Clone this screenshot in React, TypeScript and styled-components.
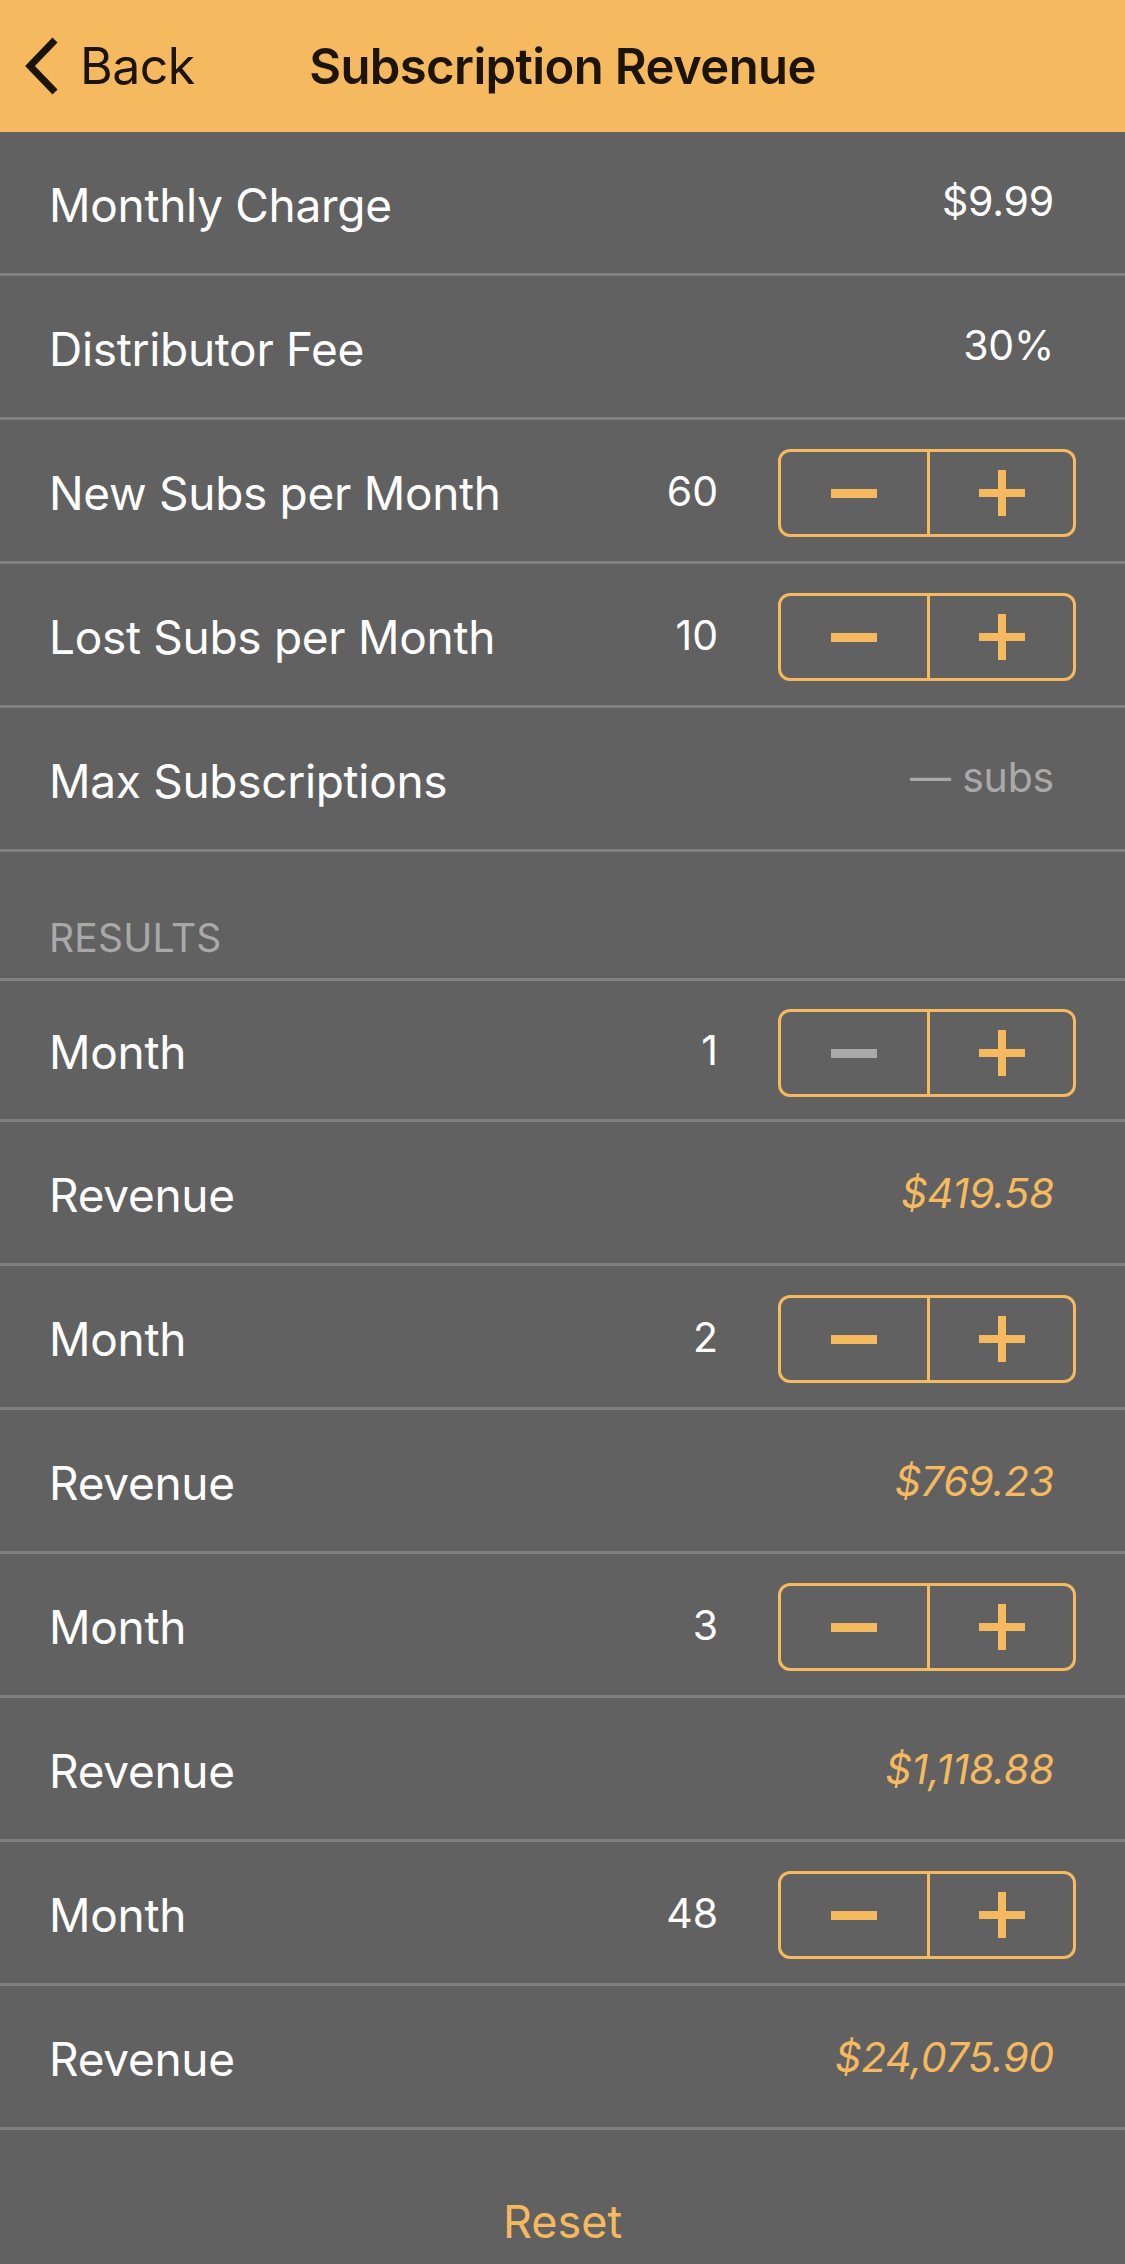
import React from "react";
import styled, { createGlobalStyle } from "styled-components";

const ORANGE = "#f5b95f";
const BG = "#616161";
const SEP = "#828282";

const GlobalStyle = createGlobalStyle`
  html, body { margin: 0; padding: 0; background: ${BG}; }
  body { font-family: Inter, "Noto Sans", "Liberation Sans", sans-serif; -webkit-font-smoothing: antialiased; }
  * { box-sizing: border-box; }
`;

const Page = styled.div`
  width: 1125px;
  min-height: 2264px;
  background: ${BG};
  display: flex;
  flex-direction: column;
`;

const NavBar = styled.header`
  height: 132px;
  background: ${ORANGE};
  display: grid;
  grid-template-columns: 1fr auto 1fr;
  align-items: center;
  color: #1c1408;
`;

const BackButton = styled.div`
  display: flex;
  align-items: center;
  gap: 20px;
  padding-left: 24px;
  font-size: 50px;
  font-weight: 400;
  letter-spacing: -0.5px;
`;

const Title = styled.h1`
  margin: 0;
  font-size: 49px;
  font-weight: 600;
  letter-spacing: -0.6px;
`;

const Row = styled.div<{ $height?: number }>`
  height: ${(p) => p.$height ?? 144}px;
  border-bottom: 3px solid ${SEP};
  display: flex;
  align-items: center;
  padding: 0 49px;
  color: #ffffff;
`;

const Label = styled.span`
  flex: 1;
  font-size: 46px;
  letter-spacing: -0.3px;
  padding-top: 4px;
`;

const Value = styled.span<{ $muted?: boolean; $result?: boolean }>`
  font-size: 41px;
  padding-right: 22px;
  letter-spacing: -0.2px;
  color: ${(p) => (p.$result ? ORANGE : p.$muted ? "#a9a9a9" : "#ffffff")};
  font-style: ${(p) => (p.$result ? "italic" : "normal")};
  margin-top: ${(p) => (p.$result ? "0px" : "-4px")};
`;

const Count = styled.span`
  font-size: 41px;
  margin-right: 60px;
`;

const Stepper = styled.div`
  width: 298px;
  height: 88px;
  border: 3px solid ${ORANGE};
  border-radius: 12px;
  display: grid;
  grid-template-columns: 1fr 1fr;
  margin-top: 5px;
`;

const StepButton = styled.div<{ $divider?: boolean; $disabled?: boolean }>`
  display: flex;
  align-items: center;
  justify-content: center;
  border-left: ${(p) => (p.$divider ? `3px solid ${ORANGE}` : "none")};
  color: ${(p) => (p.$disabled ? "#a9a9a9" : ORANGE)};
`;

const SectionHeader = styled.div`
  height: 129px;
  border-bottom: 3px solid ${SEP};
  display: flex;
  align-items: flex-end;
  padding: 0 49px 17px;
  color: #a9a9a9;
  font-size: 39px;
  letter-spacing: 0.2px;
`;

const Footer = styled.div`
  flex: 1;
  display: flex;
  justify-content: center;
  padding-top: 64px;
`;

const ResetButton = styled.span`
  color: ${ORANGE};
  font-size: 45px;
`;

const Chevron = () => (
  <svg width="36" height="60" viewBox="0 0 36 60" fill="none">
    <polyline
      points="31,4 6,30 31,56"
      stroke="#1c1408"
      strokeWidth="7"
      strokeLinecap="butt"
      strokeLinejoin="miter"
    />
  </svg>
);

const Minus = () => (
  <svg width="46" height="46" viewBox="0 0 46 46">
    <rect x="0" y="19" width="46" height="9" fill="currentColor" />
  </svg>
);

const Plus = () => (
  <svg width="46" height="46" viewBox="0 0 46 46">
    <rect x="0" y="19" width="46" height="8" fill="currentColor" />
    <rect x="19" y="0" width="8" height="46" fill="currentColor" />
  </svg>
);

const StepperControl = ({ minusDisabled }: { minusDisabled?: boolean }) => (
  <Stepper>
    <StepButton $disabled={minusDisabled}>
      <Minus />
    </StepButton>
    <StepButton $divider>
      <Plus />
    </StepButton>
  </Stepper>
);

const results = [
  { month: "1", revenue: "$419.58", minusDisabled: true },
  { month: "2", revenue: "$769.23" },
  { month: "3", revenue: "$1,118.88" },
  { month: "48", revenue: "$24,075.90" },
];

export default function App() {
  return (
    <Page>
      <GlobalStyle />
      <NavBar>
        <BackButton>
          <Chevron />
          <span>Back</span>
        </BackButton>
        <Title>Subscription Revenue</Title>
        <div />
      </NavBar>

      <Row>
        <Label>Monthly Charge</Label>
        <Value>$9.99</Value>
      </Row>
      <Row>
        <Label>Distributor Fee</Label>
        <Value>30%</Value>
      </Row>
      <Row>
        <Label>New Subs per Month</Label>
        <Count>60</Count>
        <StepperControl />
      </Row>
      <Row>
        <Label>Lost Subs per Month</Label>
        <Count>10</Count>
        <StepperControl />
      </Row>
      <Row>
        <Label>Max Subscriptions</Label>
        <Value $muted>— subs</Value>
      </Row>

      <SectionHeader>RESULTS</SectionHeader>

      {results.map((r, i) => (
        <React.Fragment key={r.month}>
          <Row $height={i === 0 ? 141 : 144}>
            <Label>Month</Label>
            <Count>{r.month}</Count>
            <StepperControl minusDisabled={r.minusDisabled} />
          </Row>
          <Row>
            <Label>Revenue</Label>
            <Value $result>{r.revenue}</Value>
          </Row>
        </React.Fragment>
      ))}

      <Footer>
        <ResetButton>Reset</ResetButton>
      </Footer>
    </Page>
  );
}
